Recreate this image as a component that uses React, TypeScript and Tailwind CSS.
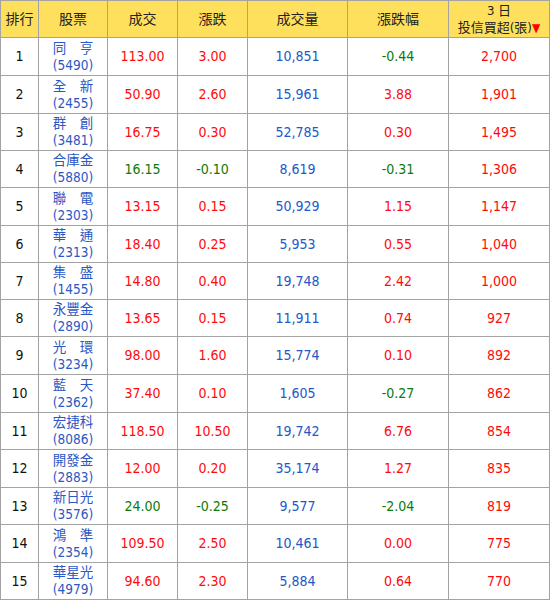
import React from "react";

type Row = {
  rank: number;
  name: string;
  code: string;
  price: string;
  change: string;
  volume: string;
  pct: string;
  buy: string;
};

const rows: Row[] = [
  { rank: 1, name: "同　亨", code: "5490", price: "113.00", change: "3.00", volume: "10,851", pct: "-0.44", buy: "2,700" },
  { rank: 2, name: "全　新", code: "2455", price: "50.90", change: "2.60", volume: "15,961", pct: "3.88", buy: "1,901" },
  { rank: 3, name: "群　創", code: "3481", price: "16.75", change: "0.30", volume: "52,785", pct: "0.30", buy: "1,495" },
  { rank: 4, name: "合庫金", code: "5880", price: "16.15", change: "-0.10", volume: "8,619", pct: "-0.31", buy: "1,306" },
  { rank: 5, name: "聯　電", code: "2303", price: "13.15", change: "0.15", volume: "50,929", pct: "1.15", buy: "1,147" },
  { rank: 6, name: "華　通", code: "2313", price: "18.40", change: "0.25", volume: "5,953", pct: "0.55", buy: "1,040" },
  { rank: 7, name: "集　盛", code: "1455", price: "14.80", change: "0.40", volume: "19,748", pct: "2.42", buy: "1,000" },
  { rank: 8, name: "永豐金", code: "2890", price: "13.65", change: "0.15", volume: "11,911", pct: "0.74", buy: "927" },
  { rank: 9, name: "光　環", code: "3234", price: "98.00", change: "1.60", volume: "15,774", pct: "0.10", buy: "892" },
  { rank: 10, name: "藍　天", code: "2362", price: "37.40", change: "0.10", volume: "1,605", pct: "-0.27", buy: "862" },
  { rank: 11, name: "宏捷科", code: "8086", price: "118.50", change: "10.50", volume: "19,742", pct: "6.76", buy: "854" },
  { rank: 12, name: "開發金", code: "2883", price: "12.00", change: "0.20", volume: "35,174", pct: "1.27", buy: "835" },
  { rank: 13, name: "新日光", code: "3576", price: "24.00", change: "-0.25", volume: "9,577", pct: "-2.04", buy: "819" },
  { rank: 14, name: "鴻　準", code: "2354", price: "109.50", change: "2.50", volume: "10,461", pct: "0.00", buy: "775" },
  { rank: 15, name: "華星光", code: "4979", price: "94.60", change: "2.30", volume: "5,884", pct: "0.64", buy: "770" },
];

// row heights taken from the grid lines of the reference
const tall = [true, true, false, false, true, false, false, false, true, true, false, true, false, true, false];

const cols = "grid grid-cols-[38px_69px_70px_70px_100px_101px_101px]";
const cell = "border-l border-t border-[#a3a3a3] flex items-center justify-center";
const tone = (v: string) => (v.startsWith("-") ? "text-[#0c7a0c]" : "text-[#ff0a0a]");

export default function App() {
  return (
    <div className="w-[550px] h-[600px] bg-white font-['DejaVu_Sans_Condensed','DejaVu_Sans','Noto_Sans_CJK_TC',sans-serif] text-[14px] leading-[17px]">
      <div className="border-r border-b border-[#a3a3a3] w-[550px]">
        <div className={`${cols} h-[37px] bg-[#ffe05c] text-[#222]`}>
          <div className={cell}>排行</div>
          <div className={cell}>股票</div>
          <div className={cell}>成交</div>
          <div className={cell}>漲跌</div>
          <div className={cell}>成交量</div>
          <div className={cell}>漲跌幅</div>
          <div className={`${cell} flex-col text-[13px]`}>
            <span>3 日</span>
            <span>
              投信買超(張)<span className="text-[#ff0000] text-[12px]">▼</span>
            </span>
          </div>
        </div>
        {rows.map((r, i) => (
          <div
            key={r.rank}
            className={`${cols} ${tall[i] ? "h-[38px]" : "h-[37px]"}`}
          >
            <div className={`${cell} text-[#111]`}>{r.rank}</div>
            <div className={`${cell} flex-col text-[#2a58c4] text-[13.5px]`}>
              <span>{r.name}</span>
              <span>({r.code})</span>
            </div>
            <div className={`${cell} ${tone(r.change)}`}>{r.price}</div>
            <div className={`${cell} ${tone(r.change)}`}>{r.change}</div>
            <div className={`${cell} text-[#2258c8]`}>{r.volume}</div>
            <div className={`${cell} ${tone(r.pct)}`}>{r.pct}</div>
            <div className={`${cell} text-[#ff0a0a]`}>{r.buy}</div>
          </div>
        ))}
      </div>
    </div>
  );
}
